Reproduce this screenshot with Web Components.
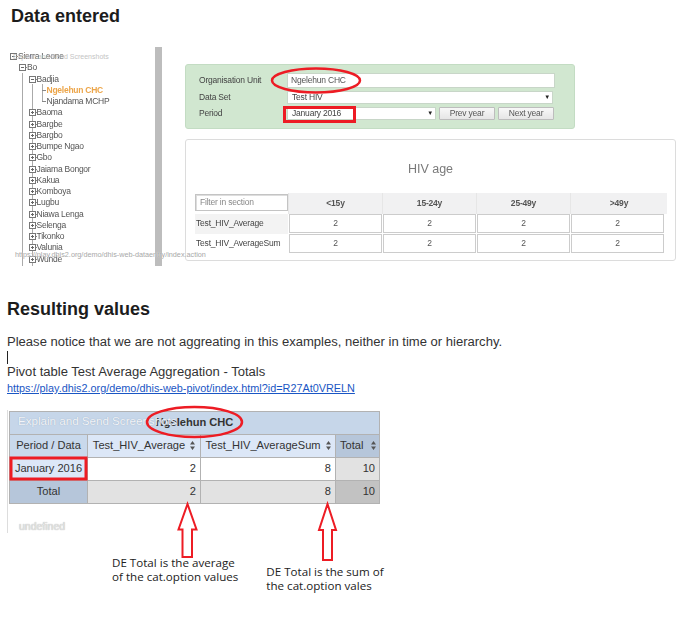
<!DOCTYPE html>
<html lang="en"><head><meta charset="utf-8"><title>Data entered</title>
<style>
html,body{margin:0;padding:0;background:#fff}
body{width:686px;height:635px;overflow:hidden;font-family:"Liberation Sans",Arial,sans-serif;color:#222}
</style></head><body>
<doc-page>
  <doc-heading style="--top:5px;--bottom:20px">Data entered</doc-heading>
  <entry-shot></entry-shot>
  <doc-heading style="--top:32px;--bottom:14px;--left:7px">Resulting values</doc-heading>
  <doc-text></doc-text>
  <pivot-result></pivot-result>
  <note-row></note-row>
  <red-marks></red-marks>
</doc-page>
<script>
function def(name,html,init){
  customElements.define(name,class extends HTMLElement{
    connectedCallback(){
      if(this.shadowRoot)return;
      const r=this.attachShadow({mode:'open'});
      r.innerHTML=typeof html==='function'?html(this):html;
      if(init)init(r,this);
    }
  });
}
def('doc-page',`<style>:host{display:block;position:relative;width:686px;height:635px;overflow:hidden}</style><slot></slot>`);
def('doc-heading',`<style>:host{display:block;font:bold 18px/22px "Liberation Sans",Arial,sans-serif;color:#1c1c1c;
  margin:var(--top,0) 0 var(--bottom,0) var(--left,11px)}</style><slot></slot>`);
def('tree-node',h=>{
  const l=+h.getAttribute('level')||0,s=h.getAttribute('state')||'leaf',sel=h.hasAttribute('selected');
  const box=s==='leaf'?'<i class="leaf"></i>':`<i class="box ${s}"></i><i class="dash"></i>`;
  return `<style>
  :host{display:flex;align-items:center;height:11.25px;font:8.5px/11px "Liberation Sans",Arial,sans-serif;letter-spacing:-.25px;color:${sel?'#eca549':'#555'};${sel?'font-weight:bold;':''}
    padding-left:${l===3?33.5:[2,11,20.5][l]}px;white-space:nowrap}
  i{display:block;flex:none}
  .box{width:5px;height:5px;border:1px solid #777;background:linear-gradient(#666,#666) center/3px 1px no-repeat #fff}
  .plus{background:linear-gradient(#666,#666) center/3px 1px no-repeat,linear-gradient(#666,#666) center/1px 3px no-repeat,#fff}
  .dash{width:1px;height:1px;background:#888}
  .leaf{width:4px;height:1px;background:#888;margin-right:1px}
  </style>${box}<slot></slot>`;
});
def('tree-pane',`<style>
  :host{display:block;box-sizing:border-box;width:147px;height:219px;padding-top:4px;overflow:hidden;
   background:linear-gradient(#aaa,#aaa) 13.5px 26px/1px 193px no-repeat,linear-gradient(#aaa,#aaa) 23.5px 37px/1px 182px no-repeat,linear-gradient(#aaa,#aaa) 33.5px 37px/1px 18px no-repeat}
</style><slot></slot>`);
def('entry-form',`<style>
  :host{display:grid;box-sizing:border-box;width:390px;height:65px;grid-template-columns:88px 1fr;row-gap:3px;align-content:start;
   padding:8px 20px 0 13px;background:#d1e7d0;border:1px solid #c3dcc3;border-radius:3px;font:8.5px/11px "Liberation Sans",Arial,sans-serif;letter-spacing:-.2px;color:#444}
  .lab{align-self:center}
  .f{box-sizing:border-box;background:#fff;border:1px solid #c8d6c8;padding-left:3px;color:#444;display:flex;justify-content:space-between;align-items:center}
  .org{height:15px;width:268px;padding-left:3px;color:#555}
  .ds{height:13px;width:266px;padding-left:4px}
  .per{display:flex;gap:3px;height:13px;width:267px}
  .per .f{width:149px;padding-left:4px}
  .b{box-sizing:border-box;width:56px;background:linear-gradient(#f8f8f8,#e6e6e6);border:1px solid #bdbdbd;border-radius:1px;text-align:center;color:#555;line-height:11px}
  .ar{font-size:6px;color:#222;padding-right:2px}
</style>
<div class="lab">Organisation Unit</div><div class="f org">Ngelehun CHC</div>
<div class="lab">Data Set</div><div class="f ds"><span>Test HIV</span><span class="ar">▼</span></div>
<div class="lab">Period</div><div class="per"><div class="f"><span>January 2016</span><span class="ar">▼</span></div><div class="b">Prev year</div><div class="b">Next year</div></div>`);
def('entry-section',`<style>
  :host{display:block;box-sizing:border-box;width:491px;height:122px;margin-top:10px;padding:20px 9px 0 9px;border:1px solid #dcdcdc;border-radius:3px;background:#fff;
   font:8.5px/13px "Liberation Sans",Arial,sans-serif;letter-spacing:-.2px;color:#555}
  h3{margin:0 0 15px;text-align:center;font:normal 12.5px/18px "Liberation Sans",Arial,sans-serif;letter-spacing:0;color:#7a7a7a;height:18px}
  .g{display:grid;grid-template-columns:93px repeat(4,94px);column-gap:0;grid-auto-rows:auto}
  .filt{box-sizing:border-box;height:17px;margin-top:1px;width:93px;border:1px solid #c4c4c4;box-shadow:inset 1px 1px 0 #ddd;padding-left:4px;line-height:15px;color:#888}
  .h{height:21px;line-height:20px;background:#f1f1f2;text-align:center;font-weight:bold;border-left:1px solid #e6e6e6;box-sizing:border-box;color:#555}
  .h.last{margin-right:-3px}
  .lab{height:20px;line-height:19px;padding-left:1px;box-sizing:border-box;color:#444}
  .lab.a{background:#f3f3f3}
  .c{height:20px;padding:0 0 1px 1px;box-sizing:border-box}
  .c div{height:19px;box-sizing:border-box;border:1px solid #ccc;text-align:center;line-height:17px;background:#fff}
</style>
<h3>HIV age</h3>
<div class="g">
 <div class="filt">Filter in section</div><div class="h">&lt;15y</div><div class="h">15-24y</div><div class="h">25-49y</div><div class="h last">&gt;49y</div>
 <div class="lab a">Test_HIV_Average</div><div class="c"><div>2</div></div><div class="c"><div>2</div></div><div class="c"><div>2</div></div><div class="c"><div>2</div></div>
 <div class="lab">Test_HIV_AverageSum</div><div class="c"><div>2</div></div><div class="c"><div>2</div></div><div class="c"><div>2</div></div><div class="c"><div>2</div></div>
</div>`);
def('entry-shot',`<style>
  :host{display:flex;position:relative;box-sizing:border-box;height:219px;margin-left:8px;width:678px}
  .sb{width:7px;height:219px;background:#bdbdbd;flex:none}
  .main{margin-left:23px;padding-top:17px;filter:blur(.25px)}
  .ghost{position:absolute;font:7px/11px "Liberation Sans",Arial,sans-serif;color:#c4c4c4;white-space:nowrap}
  .g1{left:5px;top:4px}
  .g2{left:7px;top:202px;font-size:7.25px;color:#a8a8a8;text-shadow:0 0 1px #fff}
</style>
<tree-pane style="filter:blur(.2px)">
 <tree-node level="0" state="minus"><span>Sierra Leone</span></tree-node>
 <tree-node level="1" state="minus">Bo</tree-node>
 <tree-node level="2" state="minus">Badjia</tree-node>
 <tree-node level="3" selected>Ngelehun CHC</tree-node>
 <tree-node level="3">Njandama MCHP</tree-node>
 <tree-node level="2" state="plus">Baoma</tree-node>
 <tree-node level="2" state="plus">Bargbe</tree-node>
 <tree-node level="2" state="plus">Bargbo</tree-node>
 <tree-node level="2" state="plus">Bumpe Ngao</tree-node>
 <tree-node level="2" state="plus">Gbo</tree-node>
 <tree-node level="2" state="plus">Jaiama Bongor</tree-node>
 <tree-node level="2" state="plus">Kakua</tree-node>
 <tree-node level="2" state="plus">Komboya</tree-node>
 <tree-node level="2" state="plus">Lugbu</tree-node>
 <tree-node level="2" state="plus">Niawa Lenga</tree-node>
 <tree-node level="2" state="plus">Selenga</tree-node>
 <tree-node level="2" state="plus">Tikonko</tree-node>
 <tree-node level="2" state="plus">Valunia</tree-node>
 <tree-node level="2" state="plus">Wunde</tree-node>
</tree-pane>
<div class="sb"></div>
<div class="main"><entry-form></entry-form><entry-section></entry-section></div>
<div class="ghost g1">Explain and Send Screenshots</div>
<div class="ghost g2">https://play.dhis2.org/demo/dhis-web-dataentry/index.action</div>`);
def('doc-text',`<style>
  :host{display:block;margin-left:7px;font:13.05px/16px "Liberation Sans",Arial,sans-serif;color:#333}
  p{margin:0}
  .caret{width:1px;height:13px;background:#222;margin:1px 0 0}
  a{display:block;font-size:10.85px;line-height:14px;color:#1a56c4;text-decoration:underline;margin-top:1px}
</style>
<p>Please notice that we are not aggreating in this examples, neither in time or hierarchy.</p>
<div class="caret"></div>
<p>Pivot table Test Average Aggregation - Totals</p>
<a href="#">https://play.dhis2.org/demo/dhis-web-pivot/index.html?id=R27At0VRELN</a>`);
const sort=(m)=>`<svg class="s" style="margin-left:${m}px" width="5" height="9" viewBox="0 0 5 9" fill="#555"><path d="M2.500 0L5 3.500H0ZM2.500 9L0 5.500H5Z"/></svg>`;
def('pivot-result',`<style>
  :host{display:block;position:relative;box-sizing:border-box;margin:15px 0 0 7px;width:380px;height:123px;padding:1px 0 0 2px;
    background:linear-gradient(#ddd,#ddd) 0 0/1px 100% no-repeat;font:11.1px/1 "Liberation Sans",Arial,sans-serif;color:#333}
  table{border-collapse:collapse;table-layout:fixed;width:370px}
  td,th{border:1px solid #b2b2b2;height:23px;padding:0 4px;font-weight:normal;box-sizing:border-box;white-space:nowrap}
  .t{background:#c6d6e9;text-align:center;font-weight:bold;padding:0}
  .dim{background:#c9d9ec;text-align:center}
  .hd{background:#dce7f7;text-align:center}
  .tot{background:#b6c6da;text-align:center}
  .row{background:#dce7f8;text-align:center}
  .n{text-align:right;background:#fff}
  .g1{text-align:right;background:#e2e2e2}
  .g2{text-align:right;background:#c2c2c2}
  .s{vertical-align:-1px}
  .ghost{position:absolute;color:#f2f4f8;text-shadow:0 0 1px #8fa3bb;white-space:nowrap}
  .e{left:11px;top:5px;font-size:11.6px}
  .u{left:12px;top:111px;font-size:10.5px;color:#e6e6e6;text-shadow:0 0 1px #999}
</style>
<table><colgroup><col style="width:78px"><col style="width:113px"><col style="width:135px"><col style="width:44px"></colgroup>
<tr><th class="t" colspan="4">Ngelehun CHC</th></tr>
<tr><th class="dim">Period / Data</th><th class="hd">Test_HIV_Average${sort(5)}</th><th class="hd">Test_HIV_AverageSum${sort(5)}</th><th class="tot">Total${sort(8)}</th></tr>
<tr><td class="row">January 2016</td><td class="n">2</td><td class="n">8</td><td class="g1">10</td></tr>
<tr><td class="tot">Total</td><td class="g1">2</td><td class="g1">8</td><td class="g2">10</td></tr>
</table>
<div class="ghost e">Explain and Send Screenshots</div>
<div class="ghost u">undefined</div>`);
def('note-row',`<style>
  :host{display:flex;align-items:flex-start;margin:23px 0 0 112px;font:11.6px/14px "Open Sans",sans-serif;color:#222}
  p{margin:0;white-space:nowrap}
  .r{margin-left:28px;margin-top:9px}
</style><p>DE Total is the average<br>of the cat.option values</p><p class="r">DE Total is the sum of<br>the cat.option vales</p>`);
def('red-marks',`<style>:host{position:absolute;inset:0;display:block;pointer-events:none}svg{display:block}</style>
<svg width="686" height="635" viewBox="0 0 686 635" fill="none" stroke="#ed1c24">
 <ellipse cx="316" cy="80.5" rx="44" ry="12" stroke-width="2.5"/>
 <rect x="284.5" y="107.5" width="70" height="14" stroke-width="3"/>
 <ellipse cx="194.5" cy="422" rx="47.5" ry="15" stroke-width="2.5"/>
 <rect x="11" y="458" width="75" height="21" stroke-width="3"/>
 <path d="M187.5 504L178.5 529.500H182.500V557H192V529.500H196.500Z" stroke-width="2"/>
 <path d="M327.500 504L319 530H323V560H332V530H336Z" stroke-width="2"/>
</svg>`);
</script>
</body></html>
